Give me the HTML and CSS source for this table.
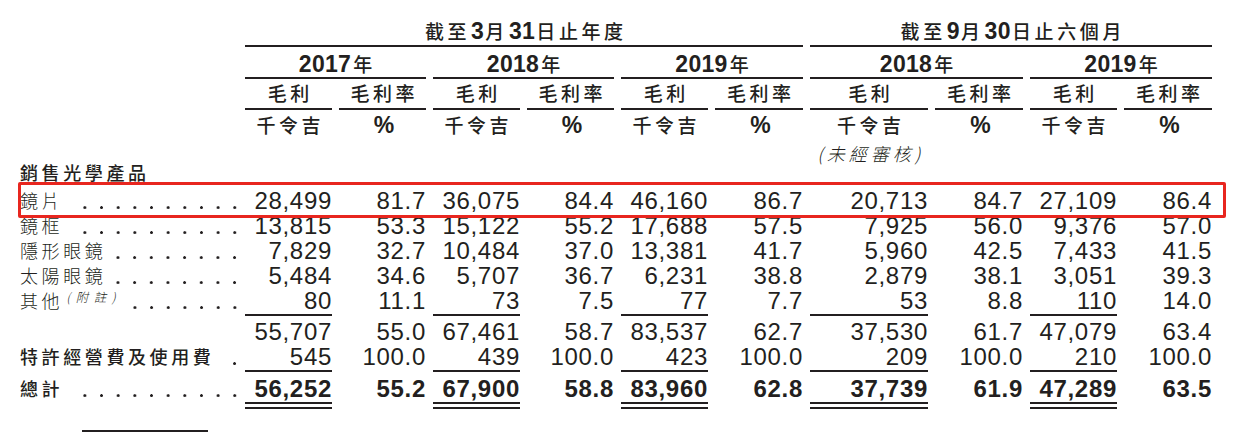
FILE: index.html
```html
<!DOCTYPE html>
<html lang="zh-Hant">
<head>
<meta charset="utf-8">
<title>毛利及毛利率</title>
<link rel="stylesheet" href="styles.css">
</head>
<body>
<div class="sheet">
  <div class="table">
    <div class="row r-title">
      <div class="label"></div>
      <div class="h-title span6 ruled">截至<b class="d">3</b>月<b class="d">31</b>日止年度</div>
      <div class="h-title span4 ruled">截至<b class="d">9</b>月<b class="d">30</b>日止六個月</div>
    </div>
    <div class="row r-year">
      <div class="label"></div>
      <div class="h-year span2 ruled"><b class="d">2017</b>年</div>
      <div class="h-year span2 ruled"><b class="d">2018</b>年</div>
      <div class="h-year span2 ruled"><b class="d">2019</b>年</div>
      <div class="h-year span2 ruled"><b class="d">2018</b>年</div>
      <div class="h-year span2 ruled"><b class="d">2019</b>年</div>
    </div>
    <div class="row r-kind">
      <div class="label"></div>
      <div class="h-kind ruled">毛利</div><div class="h-kind ruled">毛利率</div>
      <div class="h-kind ruled">毛利</div><div class="h-kind ruled">毛利率</div>
      <div class="h-kind ruled">毛利</div><div class="h-kind ruled">毛利率</div>
      <div class="h-kind ruled">毛利</div><div class="h-kind ruled">毛利率</div>
      <div class="h-kind ruled">毛利</div><div class="h-kind ruled">毛利率</div>
    </div>
    <div class="row r-unit">
      <div class="label"></div>
      <div class="h-unit">千令吉</div><div class="h-unit"><b class="d">%</b></div>
      <div class="h-unit">千令吉</div><div class="h-unit"><b class="d">%</b></div>
      <div class="h-unit">千令吉</div><div class="h-unit"><b class="d">%</b></div>
      <div class="h-unit">千令吉</div><div class="h-unit"><b class="d">%</b></div>
      <div class="h-unit">千令吉</div><div class="h-unit"><b class="d">%</b></div>
    </div>
    <div class="row r-note">
      <div class="label"></div>
      <div class="h-note col7">(未經審核)</div>
    </div>
    <div class="row r-section">
      <div class="label strong"><span class="lt">銷售光學產品</span></div>
    </div>
    <div class="row r-body">
      <div class="label"><span class="lt">鏡片</span><span class="dots"></span></div>
      <div class="num">28,499</div><div class="num">81.7</div>
      <div class="num">36,075</div><div class="num">84.4</div>
      <div class="num">46,160</div><div class="num">86.7</div>
      <div class="num">20,713</div><div class="num">84.7</div>
      <div class="num">27,109</div><div class="num">86.4</div>
    </div>
    <div class="row r-body">
      <div class="label"><span class="lt">鏡框</span><span class="dots"></span></div>
      <div class="num">13,815</div><div class="num">53.3</div>
      <div class="num">15,122</div><div class="num">55.2</div>
      <div class="num">17,688</div><div class="num">57.5</div>
      <div class="num">7,925</div><div class="num">56.0</div>
      <div class="num">9,376</div><div class="num">57.0</div>
    </div>
    <div class="row r-body">
      <div class="label"><span class="lt">隱形眼鏡</span><span class="dots"></span></div>
      <div class="num">7,829</div><div class="num">32.7</div>
      <div class="num">10,484</div><div class="num">37.0</div>
      <div class="num">13,381</div><div class="num">41.7</div>
      <div class="num">5,960</div><div class="num">42.5</div>
      <div class="num">7,433</div><div class="num">41.5</div>
    </div>
    <div class="row r-body">
      <div class="label"><span class="lt">太陽眼鏡</span><span class="dots"></span></div>
      <div class="num">5,484</div><div class="num">34.6</div>
      <div class="num">5,707</div><div class="num">36.7</div>
      <div class="num">6,231</div><div class="num">38.8</div>
      <div class="num">2,879</div><div class="num">38.1</div>
      <div class="num">3,051</div><div class="num">39.3</div>
    </div>
    <div class="row r-body r-last">
      <div class="label"><span class="lt">其他<sup class="fn">(附註)</sup></span><span class="dots"></span></div>
      <div class="num sum">80</div><div class="num">11.1</div>
      <div class="num sum">73</div><div class="num">7.5</div>
      <div class="num sum">77</div><div class="num">7.7</div>
      <div class="num sum">53</div><div class="num">8.8</div>
      <div class="num sum">110</div><div class="num">14.0</div>
    </div>
    <div class="row r-sub">
      <div class="label"></div>
      <div class="num">55,707</div><div class="num">55.0</div>
      <div class="num">67,461</div><div class="num">58.7</div>
      <div class="num">83,537</div><div class="num">62.7</div>
      <div class="num">37,530</div><div class="num">61.7</div>
      <div class="num">47,079</div><div class="num">63.4</div>
    </div>
    <div class="row r-fee">
      <div class="label strong"><span class="lt">特許經營費及使用費</span><span class="dots"></span></div>
      <div class="num sum">545</div><div class="num">100.0</div>
      <div class="num sum">439</div><div class="num">100.0</div>
      <div class="num sum">423</div><div class="num">100.0</div>
      <div class="num sum">209</div><div class="num">100.0</div>
      <div class="num sum">210</div><div class="num">100.0</div>
    </div>
    <div class="row r-total">
      <div class="label strong"><span class="lt">總計</span><span class="dots"></span></div>
      <div class="num total">56,252</div><div class="num">55.2</div>
      <div class="num total">67,900</div><div class="num">58.8</div>
      <div class="num total">83,960</div><div class="num">62.8</div>
      <div class="num total">37,739</div><div class="num">61.9</div>
      <div class="num total">47,289</div><div class="num">63.5</div>
    </div>
    <div class="highlight"></div>
  </div>
  <div class="footnote-rule"></div>
</div>
</body>
</html>
```

FILE: styles.css
```css
html, body {
  margin: 0;
  padding: 0;
  background: #ffffff;
}

body {
  color: #231f20;
  font-family: "Noto Sans CJK TC", "Noto Sans CJK SC", sans-serif;
  width: 1238px;
  height: 443px;
  overflow: hidden;
}

.sheet {
  display: flex;
  flex-direction: column;
}

.table {
  position: relative;
  display: grid;
  grid-template-columns: 238px 87px 87px 87px 87px 87px 88px 118px 88px 87px 88px;
  grid-template-rows: 47px 32px 31px 28px 22px 28px 25px 25px 25px 25px 28px 28px 28px 37px;
  column-gap: 7px;
}

.row {
  display: contents;
}

.label {
  grid-column: 1;
  display: flex;
  padding-left: 20px;
  font-size: 18px;
  line-height: 25px;
  letter-spacing: 3.6px;
  font-weight: 300;
  white-space: nowrap;
}

.label.strong {
  font-weight: 500;
}

.lt {
  flex: none;
}

.dots {
  flex: 1;
  margin-left: 8px;
  background-image: radial-gradient(circle at 50% 19.6px, #231f20 1.1px, rgba(35, 31, 32, 0) 1.7px);
  background-size: 16.67px 25px;
  background-repeat: repeat-x;
  background-position: right -5.3px top 0;
}

.fn {
  font-size: 12.5px;
  font-style: italic;
  letter-spacing: 5.5px;
  vertical-align: 6px;
  line-height: 0;
  margin-left: 3px;
}

.span2 { grid-column: span 2; }
.span4 { grid-column: span 4; }
.span6 { grid-column: span 6; }
.col7 { grid-column: 8; }

.ruled {
  border-bottom: 2px solid #231f20;
}

.d {
  font-family: "Liberation Sans Narrow", "Liberation Sans", sans-serif;
  font-weight: 700;
  font-size: 23px;
  letter-spacing: 0.4px;
}

.h-title,
.h-year,
.h-kind,
.h-unit,
.h-note {
  text-align: center;
  font-size: 19px;
  font-weight: 500;
  line-height: 26px;
  letter-spacing: 3.6px;
  padding-left: 3.6px;
  white-space: nowrap;
}

.h-title {
  padding-top: 18px;
}

.h-title .d {
  margin: 0 1px;
}

.h-year {
  padding-top: 4px;
}

.h-year .d {
  letter-spacing: 0.3px;
  margin-right: 2px;
}

.h-kind {
  padding-top: 1px;
}

.h-unit {
  padding-top: 2px;
}

.h-note {
  padding-top: 2px;
  font-size: 18px;
  font-weight: 300;
  font-style: italic;
  letter-spacing: 4px;
}

.num {
  text-align: right;
  font-family: "Liberation Sans Narrow", "Liberation Sans", sans-serif;
  font-size: 24px;
  line-height: 25px;
  letter-spacing: 0.7px;
  white-space: nowrap;
}

.r-last .sum,
.r-fee .sum {
  border-bottom: 2px solid #231f20;
}

.r-sub .num {
  padding-top: 3px;
}

.r-total .label,
.r-total .num {
  padding-top: 4px;
}

.r-total .num {
  font-weight: 700;
}

.num.total {
  border-bottom: 7px double #231f20;
}

.highlight {
  position: absolute;
  left: 18px;
  top: 182px;
  width: 1208px;
  height: 36px;
  box-sizing: border-box;
  border: 3px solid #e8261f;
  border-radius: 2px;
  pointer-events: none;
}

.footnote-rule {
  margin-top: 21px;
  margin-left: 82px;
  width: 126px;
  height: 2px;
  background: #231f20;
}
```
